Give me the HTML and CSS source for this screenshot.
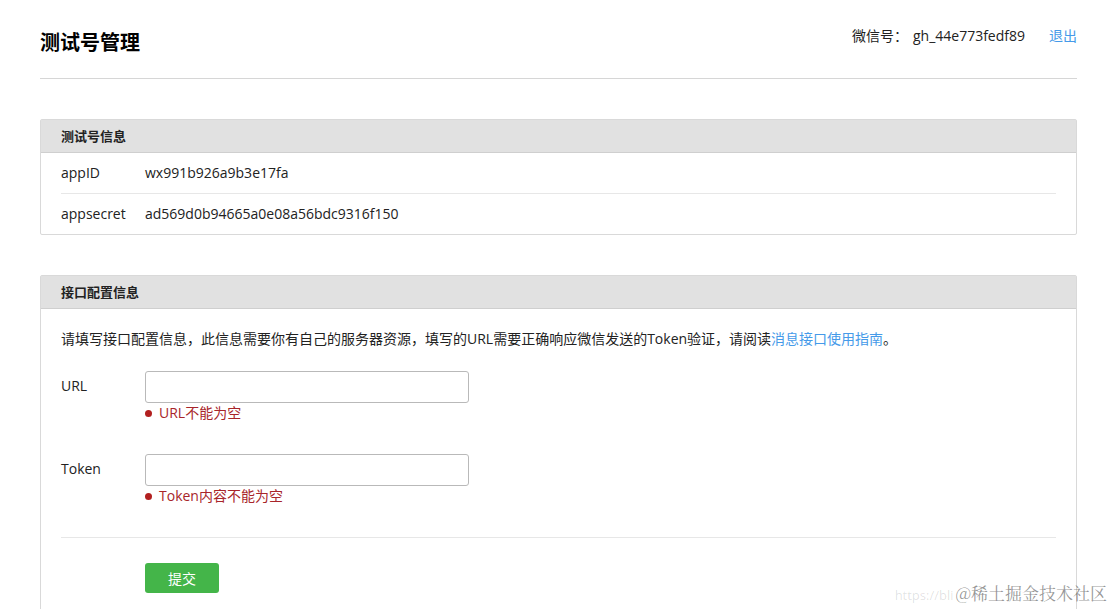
FILE: index.html
```html
<!DOCTYPE html>
<html lang="zh-CN">
<head>
<meta charset="utf-8">
<title>测试号管理</title>
<link rel="stylesheet" href="styles.css">
</head>
<body>
<div class="page">
  <header class="top">
    <h1 class="title">测试号管理</h1>
    <div class="account">
      <span class="acc-label">微信号：</span>
      <span class="acc-id">gh_44e773fedf89</span>
      <a class="logout" href="#">退出</a>
    </div>
  </header>

  <section class="panel panel-info">
    <div class="panel-head">测试号信息</div>
    <div class="panel-body rows">
      <div class="row">
        <span class="row-label">appID</span>
        <span class="row-value">wx991b926a9b3e17fa</span>
      </div>
      <div class="row">
        <span class="row-label">appsecret</span>
        <span class="row-value">ad569d0b94665a0e08a56bdc9316f150</span>
      </div>
    </div>
  </section>

  <section class="panel panel-config">
    <div class="panel-head">接口配置信息</div>
    <div class="panel-body config">
      <p class="desc">请填写接口配置信息，此信息需要你有自己的服务器资源，填写的URL需要正确响应微信发送的Token验证，请阅读<a class="link" href="#">消息接口使用指南</a>。</p>
      <div class="field">
        <label class="field-label">URL</label>
        <div class="field-main">
          <input class="input" type="text">
          <div class="error"><span class="dot"></span>URL不能为空</div>
        </div>
      </div>
      <div class="field">
        <label class="field-label">Token</label>
        <div class="field-main">
          <input class="input" type="text">
          <div class="error"><span class="dot"></span>Token内容不能为空</div>
        </div>
      </div>
      <div class="actions">
        <button class="btn" type="button">提交</button>
      </div>
    </div>
  </section>
</div>
<div class="watermark"><span class="wm-url">https://bli</span><span class="wm-name">@稀土掘金技术社区</span></div>
</body>
</html>
```

FILE: styles.css
```css
* { box-sizing: border-box; }
html, body { margin: 0; padding: 0; background: #fff; }
body {
  font-family: "Open Sans", "Noto Sans CJK SC", sans-serif;
  font-size: 14px;
  color: #222;
  overflow: hidden;
  height: 609px;
}
.page { padding: 0 38px 0 40px; }

.top {
  display: flex;
  justify-content: space-between;
  align-items: flex-start;
  padding-top: 30px;
  padding-bottom: 24px;
  border-bottom: 1px solid #d6d6d6;
}
.title {
  margin: 0;
  font-family: "Noto Sans CJK SC", sans-serif;
  font-size: 20px;
  line-height: 24px;
  font-weight: 700;
  color: #000;
}
.account {
  display: flex;
  align-items: center;
  margin-top: -4px;
  line-height: 20px;
  font-size: 14px;
  color: #222;
}
.acc-label { margin-right: 5px; }
.logout { margin-left: 24px; color: #459ae9; text-decoration: none; }

.panel {
  margin-top: 40px;
  border: 1px solid #d9d9d9;
  border-radius: 2px;
}
.panel-head {
  height: 33px;
  line-height: 32px;
  padding: 0 20px;
  background: #e1e1e1;
  border-bottom: 1px solid #cfcfcf;
  font-family: "Noto Sans CJK SC", sans-serif;
  font-weight: 700;
  font-size: 13px;
  color: #222;
}
.rows { padding: 0 20px; }
.row {
  display: flex;
  align-items: center;
  height: 40px;
  padding-bottom: 2px;
  color: #222;
}
.row + .row { border-top: 1px solid #e7e7e7; height: 41px; padding-bottom: 2px; }
.row-label { width: 84px; }

.config { padding: 20px 20px 30px; }
.desc {
  margin: 0 0 22px;
  line-height: 20px;
  font-size: 14px;
  color: #222;
}
.link { color: #459ae9; text-decoration: none; }

.field { display: flex; align-items: flex-start; margin-bottom: 31px; }
.field-label { width: 84px; line-height: 28px; padding-top: 1px; }
.field-main { display: flex; flex-direction: column; }
.input {
  width: 324px;
  height: 32px;
  border: 1px solid #b9b9b9;
  border-radius: 3px;
  background: #fff;
  padding: 0 8px;
  font-size: 14px;
}
.error {
  display: flex;
  align-items: center;
  line-height: 20px;
  color: #a8252a;
}
.dot {
  width: 7px; height: 7px;
  border-radius: 50%;
  background: #b21f1f;
  margin-right: 7px;
}
.actions {
  border-top: 1px solid #e7e7e7;
  padding: 25px 0 0 84px;
}
.btn {
  width: 74px;
  height: 30px;
  border: 0;
  border-radius: 3px;
  background: #44b549;
  color: #fff;
  font-family: "Noto Sans CJK SC", sans-serif;
  font-size: 14px;
  cursor: pointer;
}

.watermark {
  position: absolute;
  right: 8px;
  top: 580px;
  display: flex;
  align-items: baseline;
  white-space: nowrap;
}
.wm-url {
  font-size: 13px;
  color: rgba(0,0,0,0.12);
  margin-right: 2px;
}
.wm-name {
  font-family: "Noto Serif CJK SC", "Noto Sans CJK SC", serif;
  font-size: 17px;
  color: rgba(60,60,60,0.55);
}
```
